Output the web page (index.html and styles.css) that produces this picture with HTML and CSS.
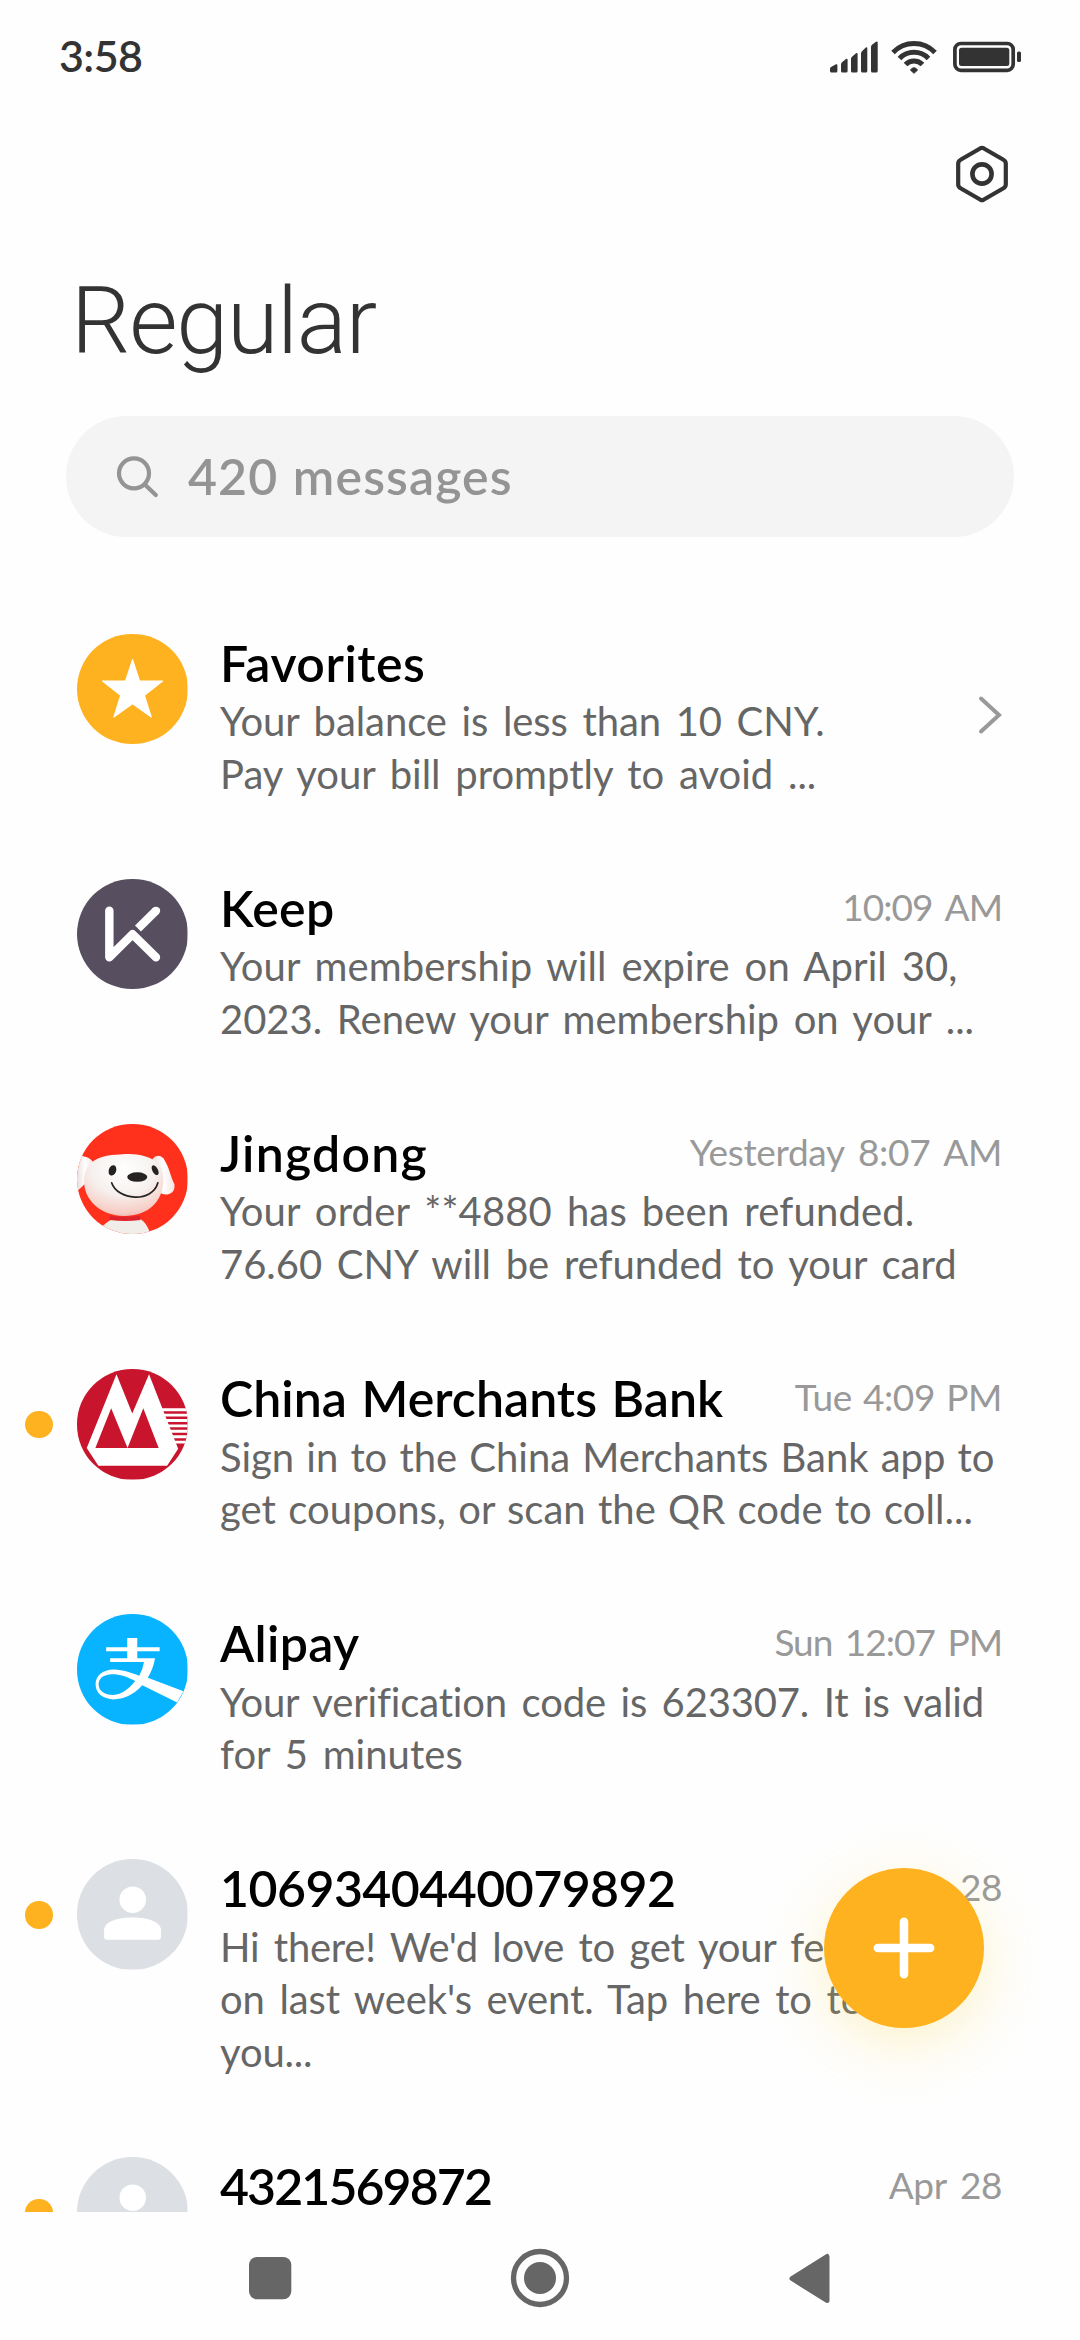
FILE: index.html
```html
<!DOCTYPE html>
<html lang="en">
<head>
<meta charset="utf-8">
<title>Messages</title>
<link rel="stylesheet" href="styles.css">
</head>
<body>
<div class="screen">
  <header class="status">
    <span class="clock">3:58</span>
    <span class="status-icons">
      <svg width="50" height="40" viewBox="0 0 50 40" fill="#333">
        <path d="M1 31q0-1.500 1-2l5-2.700q1.400-.5 1.400 1V33q0 1.500-1.500 1.500H2.500Q1 34.500 1 33z"/>
        <path d="M12 26.500q0-1.500 1-2.200l4-3.300q1.600-.9 1.600.8V33q0 1.500-1.500 1.500h-3.600Q12 34.500 12 33z"/>
        <path d="M22 21q0-1.500 1-2.200l4-3.500q1.600-.9 1.600.8V33q0 1.500-1.500 1.500h-3.600Q22 34.500 22 33z"/>
        <path d="M32 15.500q0-1.500 1-2.200l3.800-3.700q1.500-.9 1.500.8V33q0 1.500-1.500 1.500h-3.300Q32 34.500 32 33z"/>
        <path d="M42 9q0-1.500 1-2.200L47 3.700q1.700-.7 1.700.8V33q0 1.500-1.500 1.500h-3.700Q42 34.500 42 33z"/>
      </svg>
      <svg class="wifi" width="48" height="40" viewBox="0 0 48 40">
        <g fill="none" stroke="#333" stroke-width="5">
          <path d="M3 14.500A29 29 0 0 1 45 14.500"/>
          <path d="M9.500 20.500A20.200 20.200 0 0 1 38.500 20.500"/>
          <path d="M15.500 26.500A11.800 11.800 0 0 1 32.500 26.500"/>
        </g>
        <path d="M20.400 32Q24 27.500 27.600 32L24 35.300z" fill="#333" stroke="#333" stroke-linejoin="round"/>
      </svg>
      <svg class="battery" width="72" height="40" viewBox="0 0 72 40">
        <rect x="2.900" y="5.500" width="58.300" height="26.800" rx="6" fill="none" stroke="#333" stroke-width="3.700"/>
        <rect x="7" y="9.800" width="50.300" height="18.200" rx="2.500" fill="#333"/>
        <rect x="65" y="13.600" width="4" height="10.400" rx="1.500" fill="#333"/>
      </svg>
    </span>
  </header>

  <div class="toolbar">
    <svg width="64" height="64" viewBox="0 0 64 64" fill="none" stroke="#333" stroke-linejoin="round">
      <path d="M30.500 6.200q1.500-.8 3 0l19.500 11.300q2.800 1.500 2.800 4v21q0 2.500-2.800 4L33.500 57.800q-1.500.8-3 0L11 46.500q-2.800-1.500-2.800-4v-21q0-2.500 2.800-4z" stroke-width="4.200"/>
      <circle cx="32" cy="32" r="9.600" stroke-width="4.600"/>
    </svg>
  </div>

  <h1 class="title">Regular</h1>

  <div class="search">
    <svg width="44" height="44" viewBox="0 0 44 44" fill="none" stroke="#949494" stroke-width="4.200" stroke-linecap="round">
      <circle cx="18" cy="18.300" r="15"/>
      <path d="M28.800 29.500l11 10.500"/>
    </svg>
    <span class="search-text">420 messages</span>
  </div>

  <main class="list">
    <article class="row">
      <i></i>
      <svg class="avatar" viewBox="0 0 110 110">
        <rect width="110" height="110" fill="#ffb21f"/>
        <path d="M55.300 25.300L62.300 46.800H85.200L67.200 61.200 74 82.800 55.300 69.500 36.600 82.800 43.400 61.200 25.400 46.800H48.300z" fill="#fff" stroke="#fff" stroke-linejoin="round"/>
      </svg>
      <div class="body">
        <div class="head"><h2 class="ls-fav">Favorites</h2></div>
        <p><span class="p-fav1">Your balance is less than 10 CNY.</span><span class="p-fav2">Pay your bill promptly to avoid ...</span></p>
      </div>
      <svg class="chevron" width="26" height="42" viewBox="0 0 26 42" fill="none" stroke="#999" stroke-width="4" stroke-linecap="round"><path d="M4 4.500L22 21 4 37.500"/></svg>
    </article>

    <article class="row">
      <i></i>
      <svg class="avatar" viewBox="0 0 110 110">
        <rect width="110" height="110" fill="#574f5f"/>
        <g fill="none" stroke="#fff" stroke-width="8.400">
          <path d="M32.200 31.500V78L55.300 55 78.600 78" stroke-linecap="round" stroke-linejoin="round"/>
          <path d="M78.600 31.700L60.700 49.200"/>
        </g>
        <circle cx="78.600" cy="31.700" r="4.200" fill="#fff"/>
      </svg>
      <div class="body">
        <div class="head"><h2 class="ls-keep">Keep</h2><time class="t-keep">10:09 AM</time></div>
        <p><span class="p-keep1">Your membership will expire on April 30,</span><span class="p-keep2">2023. Renew your membership on your ...</span></p>
      </div>
    </article>

    <article class="row">
      <i></i>
      <svg class="avatar" viewBox="0 0 110 110">
        <defs>
          <radialGradient id="fur" cx=".5" cy=".25" r=".8"><stop offset="0" stop-color="#fff"/><stop offset=".5" stop-color="#f6f1ef"/><stop offset=".85" stop-color="#f7cfc7"/><stop offset="1" stop-color="#efb5ac"/></radialGradient>
          <linearGradient id="ear" x1="0" x2="1" y1="0" y2="0"><stop offset="0" stop-color="#e9dfdc"/><stop offset=".5" stop-color="#fff"/><stop offset="1" stop-color="#f3e6e3"/></linearGradient>
        </defs>
        <rect width="110" height="110" fill="#ff311c"/>
        <path d="M0 30L6 32Q13 33 16 38L9 58Q6 62 1 66L0 64z" fill="url(#ear)"/>
        <path d="M75 35Q80 29 86 34C92 43 93 52 97 60Q98 68 91 70Q86 71 82 68z" fill="url(#ear)"/>
        <path d="M23 110L26 101Q32 96 36 94H62Q70 98 73 110z" fill="#f1eeea"/>
        <path d="M46 30C66 29.500 86 34 86 55C86 78 70 91.500 47 91.500C24 91.500 7 76 7 57C7 35 25 30.500 46 30z" fill="url(#fur)"/>
        <path d="M32.500 91.300Q48 93 63 91.300V95.500Q48 97.500 32.500 95.500z" fill="#df232a"/>
        <g fill="#252321">
          <ellipse cx="35.300" cy="46.200" rx="3.700" ry="5.300" transform="rotate(18 35.300 46.200)"/>
          <ellipse cx="77.800" cy="46" rx="2.800" ry="5.300" transform="rotate(-28 77.800 46)"/>
          <ellipse cx="60" cy="52.800" rx="10" ry="4.700"/>
        </g>
        <path d="M34.500 58.500C40 76 75 79 80.500 58.500" fill="none" stroke="#252321" stroke-width="1.700" stroke-linecap="round"/>
      </svg>
      <div class="body">
        <div class="head"><h2 class="ls-jd">Jingdong</h2><time class="t-jd">Yesterday 8:07 AM</time></div>
        <p><span class="p-jd1">Your order **4880 has been refunded.</span><span class="p-jd2">76.60 CNY will be refunded to your card</span></p>
      </div>
    </article>

    <article class="row">
      <i class="dot"></i>
      <svg class="avatar" viewBox="0 0 110 110">
        <rect width="110" height="110" fill="#c8152d"/>
        <path d="M39.300 5.300L55 44.300 71.700 5.300 100.700 79.300 89.700 96.300H21.300L9.700 78.700z" fill="#fff"/>
        <path d="M34 39L18.300 78.700H50.300zM66 39L50.300 78.700H81.300z" fill="#c8152d"/>
        <path d="M84 40.500H110M86 45.900H110M88 51.300H110M90 56.600H110M92 62H110M94 67.400H110M96 72.800H110" stroke="#fff" stroke-width="2.900"/>
      </svg>
      <div class="body">
        <div class="head"><h2 class="ls-cmb">China Merchants Bank</h2><time class="t-cmb">Tue 4:09 PM</time></div>
        <p class="narrow"><span>Sign in to the China Merchants Bank app to</span><span class="p-cmb2">get coupons, or scan the QR code to coll...</span></p>
      </div>
    </article>

    <article class="row">
      <i></i>
      <svg class="avatar" viewBox="0 0 110 110">
        <rect width="110" height="110" fill="#08b4ff"/>
        <path d="M29 33H50V24H60V33H82.300V37H60V44H77.700C76.500 51 74 57.500 70.500 63.500L106 77 99.700 88 65 71C56 81 46 85 36.300 85C24 84.500 18.500 77.500 18.500 70C18.500 61.500 25 55.500 37 55.300C46 55.500 53.500 58.500 62 61.500Q65.500 55 66.700 47.700H33V44H50V37H29z" fill="#fff"/>
        <path d="M58 66.800C50 62.500 43 60 35 60C26 60.300 21.500 64.500 21.500 70C21.500 76.500 27 80.700 36 80.700C44.500 80.300 51.500 74.500 58 66.800z" fill="#08b4ff"/>
      </svg>
      <div class="body">
        <div class="head"><h2 class="ls-ali">Alipay</h2><time class="t-ali">Sun 12:07 PM</time></div>
        <p><span class="p-ali1">Your verification code is 623307. It is valid</span><span class="p-ali2">for 5 minutes</span></p>
      </div>
    </article>

    <article class="row">
      <i class="dot"></i>
      <svg class="avatar" viewBox="0 0 110 110">
        <rect width="110" height="110" fill="#dce0e5"/>
        <circle cx="55.500" cy="40.500" r="13.200" fill="#fff"/>
        <path d="M27 71C27 62.500 40 58.200 55.300 58.200S83.600 62.500 83.600 71V77.500Q83.600 80.300 80.800 80.300H29.800Q27 80.300 27 77.500z" fill="#fff"/>
      </svg>
      <div class="body">
        <div class="head"><h2 class="ls-num">1069340440079892</h2><time class="t-apr">Apr 28</time></div>
        <p><span class="p-num1">Hi there! We'd love to get your feedback</span><span class="p-num2">on last week's event. Tap here to tell</span><span class="p-num3">you...</span></p>
      </div>
    </article>

    <article class="row">
      <i class="dot"></i>
      <svg class="avatar" viewBox="0 0 110 110">
        <rect width="110" height="110" fill="#dce0e5"/>
        <circle cx="55.500" cy="40.500" r="13.200" fill="#fff"/>
        <path d="M27 71C27 62.500 40 58.200 55.300 58.200S83.600 62.500 83.600 71V77.500Q83.600 80.300 80.800 80.300H29.800Q27 80.300 27 77.500z" fill="#fff"/>
      </svg>
      <div class="body">
        <div class="head"><h2 class="ls-num2">4321569872</h2><time class="t-apr">Apr 28</time></div>
      </div>
    </article>
  </main>

  <nav class="nav">
    <svg width="60" height="60" viewBox="0 0 60 60"><rect x="9" y="9" width="42.300" height="42.300" rx="8" fill="#666"/></svg>
    <svg width="60" height="60" viewBox="0 0 60 60"><circle cx="30" cy="30" r="26.500" fill="none" stroke="#666" stroke-width="5.300"/><circle cx="30" cy="30" r="16" fill="#666"/></svg>
    <svg width="60" height="60" viewBox="0 0 60 60"><path d="M47 8.500V52.500L12 30.500z" fill="#666" stroke="#666" stroke-width="5" stroke-linejoin="round"/></svg>
  </nav>

  <button class="fab" aria-label="New message">
    <svg width="64" height="64" viewBox="0 0 64 64" stroke="#fff" stroke-width="8.500" stroke-linecap="round"><path d="M32 5.800V58.200M5.800 32H58.200"/></svg>
  </button>
</div>
</body>
</html>
```
FILE: styles.css
```css
* { box-sizing: border-box; margin: 0; padding: 0; }

body {
  background: #fefefe;
  font-family: Lato, "Open Sans", sans-serif;
}

.screen {
  position: relative;
  width: 1080px;
  height: 2340px;
  overflow: hidden;
  display: flex;
  flex-direction: column;
  background: #fefefe;
}

svg { display: block; flex: none; }

.status {
  height: 111px;
  padding: 0 56px 0 59px;
  display: flex;
  justify-content: space-between;
  align-items: center;
}
.clock { font-size: 43px; font-weight: 600; letter-spacing: -.6px; color: #333; }
.status-icons { display: flex; padding-top: 4px; }
.wifi { margin-left: 11px; }
.battery { margin-left: 14px; }

.toolbar {
  height: 127px;
  padding: 0 66px 1px 0;
  display: flex;
  justify-content: flex-end;
  align-items: center;
}

.title {
  margin: 28px 0 0 71px;
  font-family: Roboto, "Noto Sans", sans-serif;
  font-size: 93.500px;
  line-height: 110px;
  font-weight: 300;
  letter-spacing: -1.250px;
  color: #333;
}

.search {
  flex: none;
  height: 121px;
  margin: 40px 66px 0;
  padding: 0 50px;
  display: flex;
  align-items: center;
  gap: 28px;
  border-radius: 61px;
  background: #f4f4f4;
}
.search-text {
  padding-bottom: 1px;
  font-size: 50px;
  font-weight: 600;
  letter-spacing: 1.100px;
  word-spacing: 1px;
  color: #949494;
}

.list {
  flex: none;
  height: 1579.500px;
  margin-top: 95.500px;
  overflow: hidden;
}
.row {
  display: grid;
  grid-template-columns: 27.500px 110px 1fr auto;
  column-gap: 25px;
  align-items: start;
  padding: 0 78px 77.700px 25px;
}
.dot {
  width: 27.500px;
  height: 27.500px;
  margin-top: 42.700px;
  border-radius: 50%;
  background: #ffb21f;
}
.avatar {
  width: 110.500px;
  height: 110.500px;
  margin: 1px 0 0 -.5px;
  border-radius: 50%;
}
.body { padding-left: 7.500px; min-width: 0; white-space: nowrap; }
.row .body:last-child { grid-column: 3 / 5; }
.head { display: flex; justify-content: space-between; }
h2 { font-size: 50px; line-height: 60px; font-weight: 600; color: #000; }
time { font-size: 37px; line-height: 58px; color: #999; word-spacing: 5px; }
.body p {
  margin-top: 2.500px;
  font-size: 40px;
  line-height: 52.500px;
  color: #666;
  word-spacing: 4.500px;
}
.body p span { display: block; }
.body p.narrow { word-spacing: 2px; letter-spacing: -.030px; }
.chevron { margin: 61px -1px 0 0; }

/* Tracking for individual names, preview lines and times */
.ls-fav { letter-spacing: .530px; }
.ls-keep { letter-spacing: .350px; }
.ls-jd { letter-spacing: 1.200px; }
.ls-cmb { letter-spacing: .040px; word-spacing: 2px; }
.ls-ali { letter-spacing: .300px; }
.ls-num { letter-spacing: -.530px; }
.ls-num2 { letter-spacing: -1.900px; }
.p-fav1 { letter-spacing: -.080px; }
.p-fav2 { letter-spacing: 0; }
.p-keep1 { letter-spacing: .110px; }
.p-keep2 { letter-spacing: -.020px; }
.p-jd1 { letter-spacing: .160px; }
.p-jd2 { letter-spacing: -.030px; }
.p-cmb2 { letter-spacing: .030px; }
.p-ali1 { letter-spacing: -.160px; }
.p-ali2 { letter-spacing: .040px; }
.p-num1 { letter-spacing: -.250px; }
.p-num2 { letter-spacing: -.110px; }
.p-num3 { letter-spacing: -.180px; }
.t-keep { letter-spacing: -1px; }
.t-jd { letter-spacing: -.320px; }
.t-cmb { letter-spacing: -.370px; word-spacing: 2px; }
.t-ali { letter-spacing: -1px; word-spacing: 4px; }
.t-apr { letter-spacing: -.440px; }

.nav {
  flex: 1;
  display: flex;
  justify-content: space-between;
  padding: 36px 240px 0;
}

.fab {
  position: absolute;
  left: 824px;
  top: 1868px;
  width: 160px;
  height: 160px;
  display: flex;
  align-items: center;
  justify-content: center;
  border: 0;
  border-radius: 50%;
  background: #ffb21f;
  box-shadow: 0 16px 60px rgba(250, 215, 80, .3);
}
```
